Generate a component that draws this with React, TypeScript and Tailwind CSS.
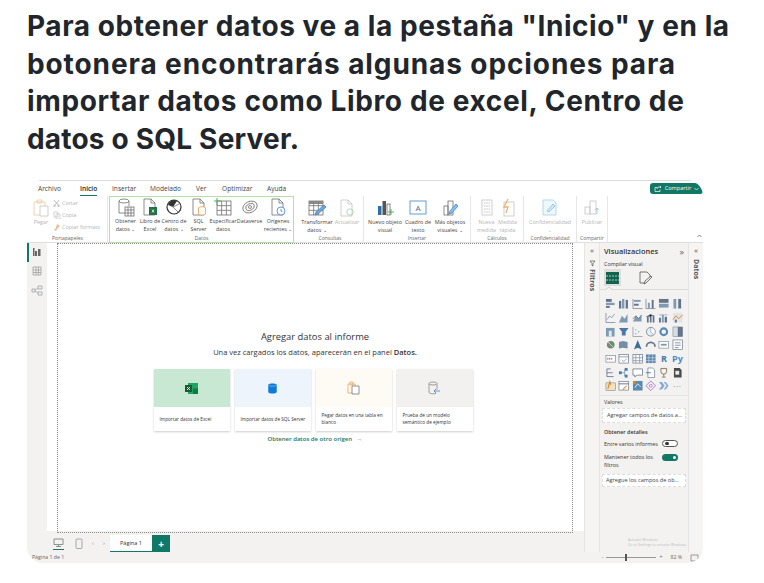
import React from "react";

const G = "#6f6f6f";
const L = "#c4c4c4";

function Ic({ w = 18, h = 20, children }: { w?: number; h?: number; children: React.ReactNode }) {
  return (
    <svg width={w} height={h} viewBox={`0 0 ${w} ${h}`} fill="none" strokeWidth={0.8} stroke={G} className="shrink-0">
      {children}
    </svg>
  );
}

const Doc = ({ c = G }: { c?: string }) => <path d="M3 2h7l4 4v12H3z M10 2v4h4" stroke={c} />;
const Grid = ({ x, y, s = 9, c = G }: { x: number; y: number; s?: number; c?: string }) => (
  <g stroke={c}>
    <rect x={x} y={y} width={s} height={s} fill="#fff" />
    <path d={`M${x} ${y + s / 3}h${s}M${x} ${y + (2 * s) / 3}h${s}M${x + s / 3} ${y}v${s}M${x + (2 * s) / 3} ${y}v${s}`} />
  </g>
);

function RB({
  w,
  icon,
  l1,
  l2,
  off,
}: {
  w: number;
  icon: React.ReactNode;
  l1: string;
  l2?: string;
  off?: boolean;
}) {
  return (
    <div className="flex shrink-0 flex-col items-center" style={{ width: w }}>
      <div className="flex h-[20px] items-center justify-center">{icon}</div>
      <div className={`whitespace-nowrap text-center text-[5.4px] leading-[8px] ${off ? "text-[#b5b5b5]" : "text-[#444]"}`}>
        <div>{l1}</div>
        <div>{l2 ?? "\u00a0"}</div>
      </div>
    </div>
  );
}

function Group({
  w,
  label,
  children,
  green,
  sep = true,
}: {
  w: number;
  label: string;
  children: React.ReactNode;
  green?: boolean;
  sep?: boolean;
}) {
  return (
    <div
      className={`relative flex h-[47px] shrink-0 flex-col justify-between ${
        green ? "border-[1.5px] border-[#b5dfa5]" : `pt-[1.5px] ${sep ? "border-r border-[#e6e6e6]" : ""}`
      }`}
      style={{ width: w }}
    >
      <div className="flex justify-center">{children}</div>
      <div className={`text-center text-[5px] leading-[7px] text-[#666] ${green ? "" : "pb-[1px]"}`}>{label}</div>
    </div>
  );
}

function V({ k }: { k: number }) {
  const c = "#64748b";
  const b = "#7f9bb3";
  const kinds: React.ReactNode[] = [
    <g key="a"><rect x="1" y="1" width="6" height="3" fill={c} /><rect x="1" y="5" width="9" height="2.4" fill={b} /><rect x="1" y="8.3" width="4" height="2" fill={c} /></g>,
    <g key="b"><rect x="1" y="3" width="2.4" height="8" fill={c} /><rect x="4.2" y="1" width="2.4" height="10" fill={b} /><rect x="8" y="2" width="2.4" height="9" fill={c} /></g>,
    <g key="c"><path d="M1 1v10h10" stroke={c} strokeWidth=".7" fill="none" /><rect x="2" y="2" width="7" height="2" fill={b} /><rect x="2" y="6" width="5" height="2" fill={c} /></g>,
    <g key="d"><path d="M1 1v10h10" stroke={c} strokeWidth=".7" fill="none" /><rect x="3" y="5" width="2" height="6" fill={b} /><rect x="7" y="2" width="2" height="9" fill={c} /></g>,
    <g key="e"><rect x="1" y="1" width="10" height="4" fill={c} /><rect x="1" y="6" width="10" height="4" fill={b} /></g>,
    <g key="f"><rect x="1.5" y="1" width="3" height="10" fill={b} /><rect x="6.5" y="1" width="3" height="10" fill={c} /></g>,
    <g key="g"><path d="M1 1v10h10" stroke={c} strokeWidth=".7" fill="none" /><path d="M2 8l3-4 2 2 3-4" stroke={b} strokeWidth=".9" fill="none" /></g>,
    <g key="h"><path d="M1 11l3-7 3 3 3-5v9z" fill={b} /></g>,
    <g key="i"><path d="M1 10l3-6 3 3 3-4v7z" fill={b} /><path d="M1 7l3-3 3 3 3-4" stroke={c} fill="none" /></g>,
    <g key="j"><rect x="2" y="5" width="1.8" height="6" fill={c} /><rect x="5" y="2" width="1.8" height="9" fill={c} /><rect x="8" y="4" width="1.8" height="7" fill={c} /><path d="M1 5l4-2 5 1" stroke={b} strokeWidth=".5" /></g>,
    <g key="k"><path d="M1 3l9 0" stroke={c} strokeWidth=".5" /><rect x="1" y="6" width="2" height="5" fill={c} /><rect x="4" y="3" width="2" height="8" fill={b} /><rect x="7" y="5" width="2.4" height="6" fill={c} /></g>,
    <g key="l"><rect x="1" y="1" width="10" height="10" fill="#e3e3e3" /><path d="M1 8l3-4 3 3 4-4" stroke="#c9862d" strokeWidth=".9" fill="none" /><rect x="3" y="8" width="2" height="3" fill={c} /></g>,
    <g key="m"><path d="M1 2h9v9H1z" fill={b} /><rect x="4" y="5" width="3" height="6" fill="#e8e8e8" /></g>,
    <g key="n"><path d="M1 2h10L8 6v4H4V6z" fill="#4b78a8" /></g>,
    <g key="o"><path d="M1 1v10h10" stroke={c} strokeWidth=".6" fill="none" /><circle cx="4" cy="4" r=".7" fill={b} /><circle cx="7" cy="6" r=".7" fill={b} /><circle cx="4" cy="8" r=".7" fill={b} /></g>,
    <g key="p"><circle cx="6" cy="6" r="4.5" fill="#e9eef2" stroke={c} strokeWidth=".8" /><path d="M6 6V1.5A4.5 4.5 0 0 1 9 9.5z" fill="#fff" stroke={c} strokeWidth=".5" /></g>,
    <g key="q"><circle cx="6" cy="6" r="3.5" stroke="#5889b5" strokeWidth="2.2" fill="none" /></g>,
    <g key="r"><rect x="1" y="1" width="10" height="10" fill="#d7dde2" stroke={c} strokeWidth=".5" /><rect x="6" y="1" width="5" height="10" fill={c} /></g>,
    <g key="s"><circle cx="6" cy="6" r="4" fill="#6f8b73" /><path d="M3 3l6 6" stroke="#e8e8e8" strokeWidth=".8" /></g>,
    <g key="t"><path d="M1 3l4-1 5 1v7l-5-1-4 1z" fill="#748fa5" /></g>,
    <g key="u"><path d="M6 1l4 10-4-2-4 2z" fill="#3f6b96" /></g>,
    <g key="v"><path d="M1.5 8a4.5 4.5 0 0 1 9 0" stroke={c} strokeWidth="1.8" fill="none" /></g>,
    <g key="w"><rect x="1" y="2.5" width="10" height="7" stroke={c} strokeWidth=".6" fill="#fff" /><rect x="3" y="5" width="6" height="2" fill={b} /></g>,
    <g key="x"><rect x="1" y="1" width="10" height="10" stroke={c} strokeWidth=".7" fill="#fff" /><path d="M3 4h6M3 6.5h6M3 9h4" stroke={c} strokeWidth=".8" /></g>,
    <g key="y"><rect x="1" y="2.5" width="10" height="7" stroke={c} strokeWidth=".6" fill="#fff" /><path d="M3 7V5M5 7V5" stroke="#b4574a" /><path d="M7 7V5" stroke="#5a9a6a" /></g>,
    <g key="z"><rect x="1" y="1.5" width="10" height="9" stroke={c} strokeWidth=".7" fill="#fff" /><path d="M1 4h10M4 7l2 2 3-3" stroke={c} strokeWidth=".7" fill="none" /></g>,
    <g key="aa"><rect x="1" y="1.5" width="10" height="9" stroke={c} strokeWidth=".7" fill="#fff" /><path d="M1 5h10M1 8h10M4 1.5v9M8 1.5v9" stroke={c} strokeWidth=".6" /></g>,
    <g key="ab"><rect x="1" y="1.5" width="10" height="9" fill="#5c88ad" /><path d="M1 5h10M1 8h10M4 1.5v9M8 1.5v9" stroke="#dbe4ec" strokeWidth=".6" /></g>,
    <g key="ae"><path d="M2 10V2m0 4h6M2 2h4M2 10h7" stroke={c} strokeWidth=".9" /></g>,
    <g key="af"><rect x="1" y="4.5" width="3" height="3" fill="#3f80b5" /><rect x="7" y="1" width="3" height="3" fill="#3f80b5" /><rect x="7" y="8" width="3" height="3" fill="#3f80b5" /><path d="M4 6h3M7 2.5v7" stroke={c} strokeWidth=".6" /></g>,
    <g key="ag"><path d="M1 2h10v6.5H5L3 10.5V8.5H1z" stroke={c} strokeWidth=".8" fill="#fff" /></g>,
    <g key="ah"><path d="M3 1h5l2 2v8H3z" stroke={c} strokeWidth=".7" fill="#fff" /><path d="M1 6h5" stroke="#4b78a8" /></g>,
    <g key="ai"><path d="M3 1.5h6v3a3 3 0 0 1-6 0zM6 7.5V10M4 10.5h4" stroke="#7a6f4a" strokeWidth=".9" fill="none" /></g>,
    <g key="aj"><path d="M2 1h6l2 2v8H2z" fill="#4a4a4a" /><rect x="3.5" y="4" width="4" height="4" fill="#e9e9e9" /></g>,
    <g key="ak"><rect x="1" y="3" width="10" height="8" fill="#f0e2c0" stroke={c} strokeWidth=".5" /><path d="M3 9l2-7 1 3" stroke="#d88a1e" strokeWidth="1.2" fill="none" /></g>,
    <g key="al"><rect x="1" y="1.5" width="10" height="9" stroke={c} strokeWidth=".7" fill="#fff" /><path d="M1 4h10" stroke={c} /><path d="M5 10l4-4" stroke="#d88a1e" strokeWidth="1.1" /></g>,
    <g key="am"><rect x="1" y="1" width="10" height="10" fill="#5a8ab0" /><path d="M3 8l3-4 3 3" stroke="#fff" strokeWidth=".8" fill="none" /><rect x="1" y="1" width="3" height="3" fill="#d88a1e" /></g>,
    <g key="an"><path d="M6 1l5 5-5 5-5-5z" stroke="#a86fc4" strokeWidth=".9" fill="none" /><circle cx="6" cy="6" r="1.5" stroke="#a86fc4" strokeWidth=".8" fill="none" /></g>,
    <g key="ao"><path d="M1 2h3l3 4-3 4H1l3-4zM6 2h2l3 4-3 4H6l3-4z" fill="#7fa9d6" /></g>,
  ];
  if (k === 100) return <span className="text-[9px] font-bold leading-none text-[#3f78ad]">R</span>;
  if (k === 101) return <span className="text-[9px] font-bold leading-none text-[#4a8cc7]">Py</span>;
  if (k === 102) return <span className="text-[9px] leading-none tracking-[0.5px] text-[#999]">···</span>;
  return (
    <svg width="11.5" height="11.5" viewBox="0 0 12 12">
      {kinds[k]}
    </svg>
  );
}

const VIZ = [
  0, 1, 2, 3, 4, 5, 6, 7, 8, 9, 10, 11, 12, 13, 14, 15, 16, 17, 18, 19, 20, 21, 22, 23, 24, 25, 26, 27, 100, 101, 28, 29, 30,
  31, 32, 33, 34, 35, 36, 37, 38, 102,
];

function Card({ bg, icon, l1, l2 }: { bg: string; icon: React.ReactNode; l1: string; l2?: string }) {
  return (
    <div className="flex h-[62px] w-[76px] flex-col bg-white shadow-[0_0.5px_2px_rgba(0,0,0,0.2)]">
      <div className="flex h-[38px] items-center justify-center" style={{ background: bg }}>
        {icon}
      </div>
      <div className="flex flex-1 flex-col justify-center px-[6px] text-[4.7px] leading-[7px] text-[#333]">
        <div className="whitespace-nowrap">{l1}</div>
        {l2 && <div>{l2}</div>}
      </div>
    </div>
  );
}

export default function App() {
  return (
    <div className="h-[583px] w-[764px] overflow-hidden bg-white pl-[27px] font-['Open_Sans',sans-serif]">
      <h1 className="h-[180px] pt-[8px] font-['Inter',sans-serif] text-[28px] font-bold leading-[37.6px] text-[#21262c]">
        <div className="whitespace-nowrap tracking-[0.56px]">Para obtener datos ve a la pestaña "Inicio" y en la</div>
        <div className="whitespace-nowrap tracking-[0.9px]">botonera encontrarás algunas opciones para</div>
        <div className="whitespace-nowrap tracking-[0.63px]">importar datos como Libro de excel, Centro de</div>
        <div className="whitespace-nowrap tracking-[0.2px]">datos o SQL Server.</div>
      </h1>

      <div className="flex h-[383px] w-[676px] flex-col overflow-hidden rounded-[16px] bg-white">
        {/* tabs */}
        <div className="flex h-[16px] shrink-0 items-center border-t border-[#dcdcdc] text-[6.6px] text-[#444]">
          <span className="ml-[11px] w-[42px]">Archivo</span>
          <span className="relative w-[32px] font-semibold text-[#222]">
            Inicio
            <span className="absolute bottom-[-3px] left-0 h-[1px] w-[17px] bg-[#117865]" />
          </span>
          <span className="w-[38px]">Insertar</span>
          <span className="w-[46px]">Modelado</span>
          <span className="w-[26px]">Ver</span>
          <span className="w-[45px]">Optimizar</span>
          <span className="w-[383px]">Ayuda</span>
          <div className="flex h-[11px] w-[53px] items-center justify-center gap-[3px] rounded-[3px] rounded-tr-[8px] bg-[#117865] text-[5.6px] text-white">
            <svg width="8" height="7" viewBox="0 0 8 7" fill="none" stroke="#fff" strokeWidth=".7">
              <path d="M1 2.5h2M1 2.5v4h5v-2M3 4l1-2h3M6 1l1 1-1 1" />
            </svg>
            Compartir
            <svg width="5" height="4" viewBox="0 0 5 4" fill="none" stroke="#fff" strokeWidth=".7"><path d="M.5 1l2 2 2-2" /></svg>
          </div>
        </div>

        {/* ribbon */}
        <div className="flex h-[47px] shrink-0 border-b border-[#dedede] bg-white">
          <div className="w-[1px] shrink-0" />
          <Group w={80} label="Portapapeles">
            <div className="flex w-full">
              <div className="ml-[3px] w-[20px]">
                <RB
                  w={20}
                  off
                  l1="Pegar"
                  icon={
                    <Ic w={17} h={19}>
                      <path d="M1 4h11v13H1z M4 2h5v3H4z" stroke="#e9c9a0" />
                      <path d="M7 8h8v10H7z" stroke={L} fill="#fff" />
                    </Ic>
                  }
                />
              </div>
              <div className="ml-[2px] flex flex-col gap-[2.5px] pt-[1px] text-[5.4px] leading-[9.5px] text-[#b5b5b5]">
                <div className="flex items-center gap-[2px]">
                  <svg width="7" height="8" viewBox="0 0 7 8" fill="none" stroke="#9aa3ad" strokeWidth=".7"><path d="M1 1l4 5M6 1L2 6" /><circle cx="1.5" cy="7" r=".8" /><circle cx="5.5" cy="7" r=".8" /></svg>
                  Cortar
                </div>
                <div className="flex items-center gap-[1px]">
                  <svg width="8" height="8" viewBox="0 0 8 8" fill="none" stroke={L} strokeWidth=".7"><path d="M1 1h4v5H1zM3 3h4v5H3z" /></svg>
                  Copia
                </div>
                <div className="flex items-center gap-[1px] whitespace-nowrap">
                  <svg width="8" height="8" viewBox="0 0 8 8" fill="#e4bf8f"><path d="M4 1l3 2-3 3-1 2-2-1 2-2z" /></svg>
                  Copiar formato
                </div>
              </div>
            </div>
          </Group>
          <div className="w-[1px] shrink-0" />
          <Group w={185} label="Datos" green>
            <div className="flex w-full justify-center pl-[2px]">
              <RB w={25} l1="Obtener" l2="datos ⌄" icon={<Ic><ellipse cx="7" cy="4" rx="5" ry="2" /><path d="M2 4v12h6M12 4v5" /><Grid x={8} y={10} /></Ic>} />
              <RB w={24} l1="Libro de" l2="Excel" icon={<Ic><Doc /><rect x="8" y="10" width="8" height="8" fill="#1e7145" stroke="none" /><path d="M11 12.5l2 3M13 12.5l-2 3" stroke="#fff" /></Ic>} />
              <RB w={24} l1="Centro de" l2="datos ⌄" icon={<Ic><circle cx="9" cy="10" r="7" stroke="#333" strokeWidth="1.2" /><path d="M3 8a6 6 0 0 1 9-4l-4 6z" fill="#333" stroke="none" /><path d="M8 10l5 5M8 10l6-3" /></Ic>} />
              <RB w={25} l1="SQL" l2="Server" icon={<Ic><Doc /><ellipse cx="12" cy="11" rx="3.5" ry="1.3" stroke="#e8a04a" fill="#fff" /><path d="M8.5 11v6c1 1.3 6 1.3 7 0v-6" stroke="#e8a04a" fill="#fff" /></Ic>} />
              <RB w={24} l1="Especificar" l2="datos" icon={<Ic w={20}><Grid x={4} y={4} s={14} /><path d="M4 1v7M1 4h7" stroke="#5aa85a" strokeWidth="1" /></Ic>} />
              <RB w={29} l1="Dataverse" icon={<Ic w={18} h={16}><ellipse cx="9" cy="8" rx="7.5" ry="5.5" transform="rotate(-25 9 8)" /><ellipse cx="9" cy="8" rx="4.5" ry="3.2" transform="rotate(-25 9 8)" /><circle cx="9" cy="8" r="1.5" /></Ic>} />
              <RB w={28} l1="Orígenes" l2="recientes ⌄" icon={<Ic><Doc /><circle cx="12" cy="14" r="4" stroke="#3f85c4" fill="#fff" /><path d="M12 12v2.2h1.6" stroke="#3f85c4" /></Ic>} />
            </div>
          </Group>
          <div className="w-[3px] shrink-0" />
          <Group w={67} label="Consultas">
            <RB w={34} l1="Transformar" l2="datos ⌄" icon={<Ic w={20}><Grid x={2} y={3} s={14} /><path d="M2 3h14v3H2z" fill="#888" stroke="none" /><path d="M8 17l1-3 8-7 2 2-8 7z" fill="#6aa8dd" stroke="#3f85c4" /></Ic>} />
            <RB w={26} off l1="Actualizar" icon={<Ic><Doc c={L} /><circle cx="12" cy="14" r="3.2" stroke="#9fcf9f" /></Ic>} />
          </Group>
          <Group w={107} label="Insertar">
            <RB w={36} l1="Nuevo objeto" l2="visual" icon={<Ic w={20}><rect x="3" y="8" width="3.5" height="9" fill="#2e6da8" stroke="none" /><rect x="7.5" y="3" width="3.5" height="14" fill="#555" stroke="none" /><rect x="12" y="6" width="3" height="11" stroke="#666" /><path d="M16 11v6M13 14h6" stroke="#3aa04a" /></Ic>} />
            <RB w={30} l1="Cuadro de" l2="texto" icon={<Ic w={18}><rect x="1" y="3" width="16" height="13" stroke="#3f85c4" /><text x="9" y="13" fontSize="8" textAnchor="middle" fill="#3f6d99" stroke="none">A</text></Ic>} />
            <RB w={34} l1="Más objetos" l2="visuales ⌄" icon={<Ic><rect x="3" y="8" width="4" height="9" /><rect x="7" y="3" width="5" height="14" /><path d="M8 16l1-3 6-7 2 2-6 7z" fill="#8ac0ea" stroke="#3f85c4" /></Ic>} />
          </Group>
          <Group w={53} label="Cálculos">
            <RB w={21} off l1="Nueva" l2="medida" icon={<Ic w={14}><rect x="2" y="2" width="10" height="15" stroke={L} /><path d="M4 5h6M4 8h6M4 11h6M4 14h6" stroke={L} strokeWidth="1" strokeDasharray="1.5 .8" /></Ic>} />
            <RB w={21} off l1="Medida" l2="rápida" icon={<Ic w={16}><rect x="4" y="4" width="10" height="14" stroke={L} /><path d="M8 1L4 9h4l-2 6" stroke="#e8b36e" strokeWidth="1.3" /></Ic>} />
          </Group>
          <Group w={53} label="Confidencialidad">
            <RB w={50} off l1="Confidencialidad" l2="⌄" icon={<Ic><path d="M2 2h10l3 3v12H2z" stroke="#a5cfe8" fill="#eef7fc" /><path d="M6 13l6-7 2 2-6 6z" stroke="#8ac0de" fill="#cfe8f5" /></Ic>} />
          </Group>
          <Group w={31} label="Compartir">
            <RB w={28} off l1="Publicar" icon={<Ic><rect x="2" y="9" width="5" height="7" stroke={L} /><rect x="7" y="3" width="6" height="13" stroke={L} /><path d="M14 16v-6m-2 2l2-2 2 2" stroke="#9cc0dc" /></Ic>} />
          </Group>
          <div className="flex flex-1 items-end justify-end pb-[4px] pr-[1px]">
            <svg width="5" height="4" viewBox="0 0 5 4" fill="none" stroke="#555" strokeWidth=".7"><path d="M.5 3l2-2 2 2" /></svg>
          </div>
        </div>

        {/* main */}
        <div className="flex min-h-0 flex-1">
          {/* rail */}
          <div className="relative flex w-[20px] shrink-0 flex-col items-center gap-[9px] bg-[#f3f2f1] pt-[4px]">
            <span className="absolute left-0 top-0 h-[19px] w-[1.5px] bg-[#117865]" />
            <svg width="10" height="10" viewBox="0 0 10 10" fill="#666"><path d="M1 1h1.5v8H1zM3 4h2v5H3zM6 2h2.5v7H6z" /></svg>
            <svg width="10" height="10" viewBox="0 0 10 10" fill="none" stroke="#999" strokeWidth=".7"><path d="M1 1h8v8H1zM1 4h8M1 6.5h8M4 1v8M6.5 1v8" /></svg>
            <svg width="12" height="11" viewBox="0 0 12 11" fill="none" stroke="#999" strokeWidth=".7"><path d="M1 4h3v3H1zM7 1h4v3H7zM7 7h4v3H7zM4 5l3-2M4 6l3 2" /></svg>
          </div>

          {/* canvas */}
          <div className="flex w-[537px] min-w-0 shrink-0 flex-col bg-[#f3f2f1]">
            <div className="flex min-h-0 flex-1 bg-white pl-[10px] pr-[11px]">
              <div className="flex h-[290px] w-[516px] flex-col items-center border border-dotted border-[#8a8a8a]">
                <div className="mt-[86px] text-[9.4px] leading-[14px] text-[#333]">Agregar datos al informe</div>
                <div className="mt-[3px] text-[7.5px] leading-[11px] text-[#333]">
                  Una vez cargados los datos, aparecerán en el panel <span className="font-semibold">Datos.</span>
                </div>
                <div className="mt-[11px] flex gap-[5px] pr-[4px]">
                  <Card
                    bg="#c9e8d4"
                    l1="Importar datos de Excel"
                    icon={
                      <svg width="14" height="13" viewBox="0 0 14 13">
                        <rect x="3" y="1" width="10" height="11" fill="#21a366" />
                        <rect x="8" y="6.5" width="5" height="5.5" fill="#107c41" />
                        <rect x="0" y="3" width="7" height="7" fill="#185c37" />
                        <path d="M2 5l3 3M5 5L2 8" stroke="#fff" strokeWidth=".8" />
                      </svg>
                    }
                  />
                  <Card
                    bg="#edf4fb"
                    l1="Importar datos de SQL Server"
                    icon={
                      <svg width="9" height="11" viewBox="0 0 10 13">
                        <path d="M0 2c1-2 9-2 10 0v9c-1 2-9 2-10 0z" fill="#0f7bd6" />
                        <path d="M1 3c2 1 6 1 8 0" stroke="#9ed2f5" strokeWidth=".7" fill="none" />
                      </svg>
                    }
                  />
                  <Card
                    bg="#fdfbf3"
                    l1="Pegar datos en una tabla en"
                    l2="blanco"
                    icon={
                      <svg width="13" height="14" viewBox="0 0 13 14" fill="none" strokeWidth=".8">
                        <path d="M1 3h7v9H1zM3 1h3v3H3z" stroke="#e2a860" />
                        <path d="M5 5h7v8H5z" stroke="#777" fill="#fff" />
                      </svg>
                    }
                  />
                  <Card
                    bg="#f2f1ef"
                    l1="Prueba de un modelo"
                    l2="semántico de ejemplo"
                    icon={
                      <svg width="13" height="14" viewBox="0 0 13 14" fill="none" strokeWidth=".8">
                        <ellipse cx="5" cy="2.5" rx="4" ry="1.5" stroke="#888" />
                        <path d="M1 2.5v9c1 1.5 5 1.5 7 1M9 2.5v6" stroke="#888" />
                        <path d="M12 10H6m2-2l-2 2 2 2" stroke="#3f85c4" />
                      </svg>
                    }
                  />
                </div>
                <div className="mt-[4px] text-[6px] font-semibold leading-[9px] text-[#117865]">
                  Obtener datos de otro origen <span className="ml-[3px] font-normal text-[#777]">→</span>
                </div>
              </div>
            </div>
            {/* page tabs */}
            <div className="flex h-[21px] shrink-0 items-end pl-[2px]">
              <div className="flex h-[17px] items-center">
                <div className="ml-[2px] flex w-[14px] flex-col items-center">
                  <svg width="11" height="9" viewBox="0 0 11 9" fill="none" stroke="#666" strokeWidth=".7"><path d="M1 1h9v5.5H1zM5.5 7v1.5M3 8.5h5" /></svg>
                  <span className="mt-[2px] h-[1px] w-[11px] bg-[#117865]" />
                </div>
                <svg className="ml-[10px]" width="8" height="11" viewBox="0 0 8 11" fill="none" stroke="#888" strokeWidth=".7"><rect x="1" y="1" width="6" height="9.5" rx="1" /></svg>
                <span className="ml-[9px] w-[11px] text-[6px] text-[#888]">‹</span>
                <span className="w-[7px] text-[6px] text-[#888]">›</span>
              </div>
              <div className="flex h-[17px] w-[42px] items-center justify-center border-b border-[#117865] bg-white text-[5.6px] text-[#333]">Página 1</div>
              <div className="flex h-[17px] w-[18px] items-center justify-center bg-[#117865] text-[10px] font-bold leading-none text-white">+</div>
            </div>
          </div>

          {/* filters */}
          <div className="flex w-[16px] shrink-0 flex-col items-center border-x border-[#e4e4e4] bg-[#f6f5f4] pt-[2px] text-[#555]">
            <span className="text-[8px] leading-[9px]">«</span>
            <svg className="mt-[6px]" width="7" height="7" viewBox="0 0 7 7" fill="none" stroke="#555" strokeWidth=".7"><path d="M1 1h5L4 3.5V6L3 5.5V3.5z" /></svg>
            <span className="mt-[2px] text-[7px] font-bold leading-[9px] [writing-mode:vertical-rl]">Filtros</span>
          </div>

          {/* viz */}
          <div className="flex w-[88px] shrink-0 flex-col bg-[#f3f2f1] px-[4px]">
            <div className="flex h-[17px] items-center justify-between text-[7.4px] font-semibold text-[#333]">
              <span>Visualizaciones</span>
              <span className="text-[9px] font-normal text-[#666]">»</span>
            </div>
            <div className="mt-[1px] text-[5.4px] leading-[7px] text-[#333]">Compilar visual</div>
            <div className="mt-[1px] flex items-center">
              <div className="flex h-[17px] w-[17px] items-center justify-center bg-[#dedddb]">
                <svg width="13" height="12" viewBox="0 0 13 12"><rect width="13" height="12" fill="#12634f" /><path d="M0 4h13M0 8h13" stroke="#d5e3de" strokeWidth=".8" strokeDasharray="2 1" /></svg>
              </div>
              <svg className="ml-[18px]" width="13" height="14" viewBox="0 0 13 14" fill="none" stroke="#555" strokeWidth=".8"><path d="M1 1h7l3 3v2M1 1v11h5M5 13l1-3 6-5 1 1-6 6z" /></svg>
            </div>
            <div className="relative -mx-[4px] mt-[3px] h-[1px] bg-[#dcdcdc]">
              <svg className="absolute left-[5px] top-[-3px]" width="8" height="4" viewBox="0 0 8 4" fill="#f3f2f1" stroke="#bbb" strokeWidth=".6"><path d="M0 4l4-3 4 3" /></svg>
            </div>
            <div className="mt-[8px] grid grid-cols-6 gap-y-[1.7px]">
              {VIZ.map((k, i) => (
                <div key={i} className="flex h-[12px] w-[13.5px] items-center justify-center">
                  <V k={k} />
                </div>
              ))}
            </div>
            <div className="-mx-[4px] mt-[3px] h-[1px] bg-[#e4e4e4]" />
            <div className="mt-[2px] text-[5.4px] leading-[8px] text-[#333]">Valores</div>
            <div className="-mx-[2px] mt-[2px] flex h-[15px] items-center whitespace-nowrap border border-dashed border-[#ddd] bg-white pl-[4px] text-[5.6px] text-[#444]">
              Agregar campos de datos a...
            </div>
            <div className="mt-[5px] text-[5.4px] font-semibold leading-[8px] text-[#333]">Obtener detalles</div>
            <div className="mt-[3px] flex h-[9px] items-center justify-between pr-[6px] text-[5.4px] text-[#333]">
              <span className="whitespace-nowrap">Entre varios informes</span>
              <span className="flex h-[7px] w-[16px] shrink-0 items-center rounded-full border border-[#555] bg-white pl-[2px]"><span className="h-[3.5px] w-[3.5px] rounded-full bg-[#333]" /></span>
            </div>
            <div className="mt-[5px] flex justify-between pr-[6px] text-[5.4px] leading-[8px] text-[#333]">
              <span>
                Mantener todos los
                <br />
                filtros
              </span>
              <span className="mt-[1px] flex h-[7px] w-[16px] shrink-0 items-center justify-end rounded-full bg-[#117865] pr-[2px]"><span className="h-[3.5px] w-[3.5px] rounded-full bg-white" /></span>
            </div>
            <div className="-mx-[2px] mt-[5px] flex h-[13px] items-center whitespace-nowrap border border-dashed border-[#ddd] bg-white pl-[3px] text-[5.6px] text-[#444]">
              Agregue los campos de ob...
            </div>
            <div className="mt-[50px] pl-[24px] text-[3.6px] leading-[5px] text-[#bdbdbd]">
              <div>Activate Windows</div>
              <div className="whitespace-nowrap">Go to Settings to activate Windows.</div>
            </div>
          </div>

          {/* datos */}
          <div className="flex w-[15px] shrink-0 flex-col items-center border-l border-[#e4e4e4] bg-[#f6f5f4] pt-[2px] text-[#555]">
            <span className="text-[8px] leading-[9px]">«</span>
            <span className="mt-[5px] text-[7px] font-bold leading-[9px] [writing-mode:vertical-rl]">Datos</span>
          </div>
        </div>

        {/* status */}
        <div className="flex h-[11px] shrink-0 items-center justify-between bg-[#f3f2f1] pl-[5px] pr-[4px] text-[5.2px] text-[#666]">
          <span>Página 1 de 1</span>
          <div className="flex items-center gap-[3px]">
            <span>-</span>
            <span className="relative h-[1px] w-[50px] bg-[#999]">
              <span className="absolute left-[19px] top-[-3px] h-[7px] w-[2px] bg-[#555]" />
            </span>
            <span className="mr-[5px]">+</span>
            <span className="mr-[5px]">82 %</span>
            <svg width="9" height="8" viewBox="0 0 9 8" fill="none" stroke="#777" strokeWidth=".7"><path d="M1 1h7v6H1z" /></svg>
          </div>
        </div>
      </div>
    </div>
  );
}
